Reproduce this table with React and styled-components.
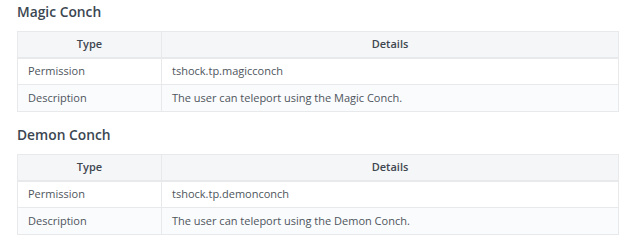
import React from 'react';
import styled, { createGlobalStyle } from 'styled-components';

const GlobalStyle = createGlobalStyle`
  body {
    margin: 0;
    background: #fff;
    font-family: "Open Sans", "Noto Sans", sans-serif;
  }
`;

const sections = [
  {
    title: 'Magic Conch',
    permission: 'tshock.tp.magicconch',
    description: 'The user can teleport using the Magic Conch.',
  },
  {
    title: 'Demon Conch',
    permission: 'tshock.tp.demonconch',
    description: 'The user can teleport using the Demon Conch.',
  },
];

const App = () => (
  <Page>
    <GlobalStyle />
    {sections.map((s) => (
      <Section key={s.title}>
        <Heading>{s.title}</Heading>
        <Table>
          <thead>
            <tr>
              <th>Type</th>
              <th>Details</th>
            </tr>
          </thead>
          <tbody>
            <tr>
              <td>Permission</td>
              <td>{s.permission}</td>
            </tr>
            <tr>
              <td>Description</td>
              <td>{s.description}</td>
            </tr>
          </tbody>
        </Table>
      </Section>
    ))}
  </Page>
);

export default App;

const Page = styled.div`
  padding: 0 15px 0 17px;
  width: 602px;
`;

const Section = styled.section`
  padding-bottom: 11px;
`;

const Heading = styled.h3`
  margin: 0 0 7px;
  height: 24px;
  line-height: 24px;
  font-size: 13.8px;
  font-weight: 600;
  color: #3b4651;
`;

const Table = styled.table`
  width: 602px;
  border-collapse: collapse;
  table-layout: fixed;
  font-size: 11px;
  color: #4e555c;

  th, td {
    height: 27px;
    padding: 0 10px;
    border: 1px solid #e7e9eb;
    box-sizing: border-box;
    text-align: left;
    line-height: 16px;
  }

  th {
    height: 26px;
    background: #f5f6f7;
    font-weight: 600;
    text-align: center;
    color: #3f4750;
    border-bottom-width: 2px;
  }

  th:first-child,
  td:first-child {
    width: 144px;
  }

  tbody tr:nth-child(2) td {
    background: #fafbfc;
  }
`;
